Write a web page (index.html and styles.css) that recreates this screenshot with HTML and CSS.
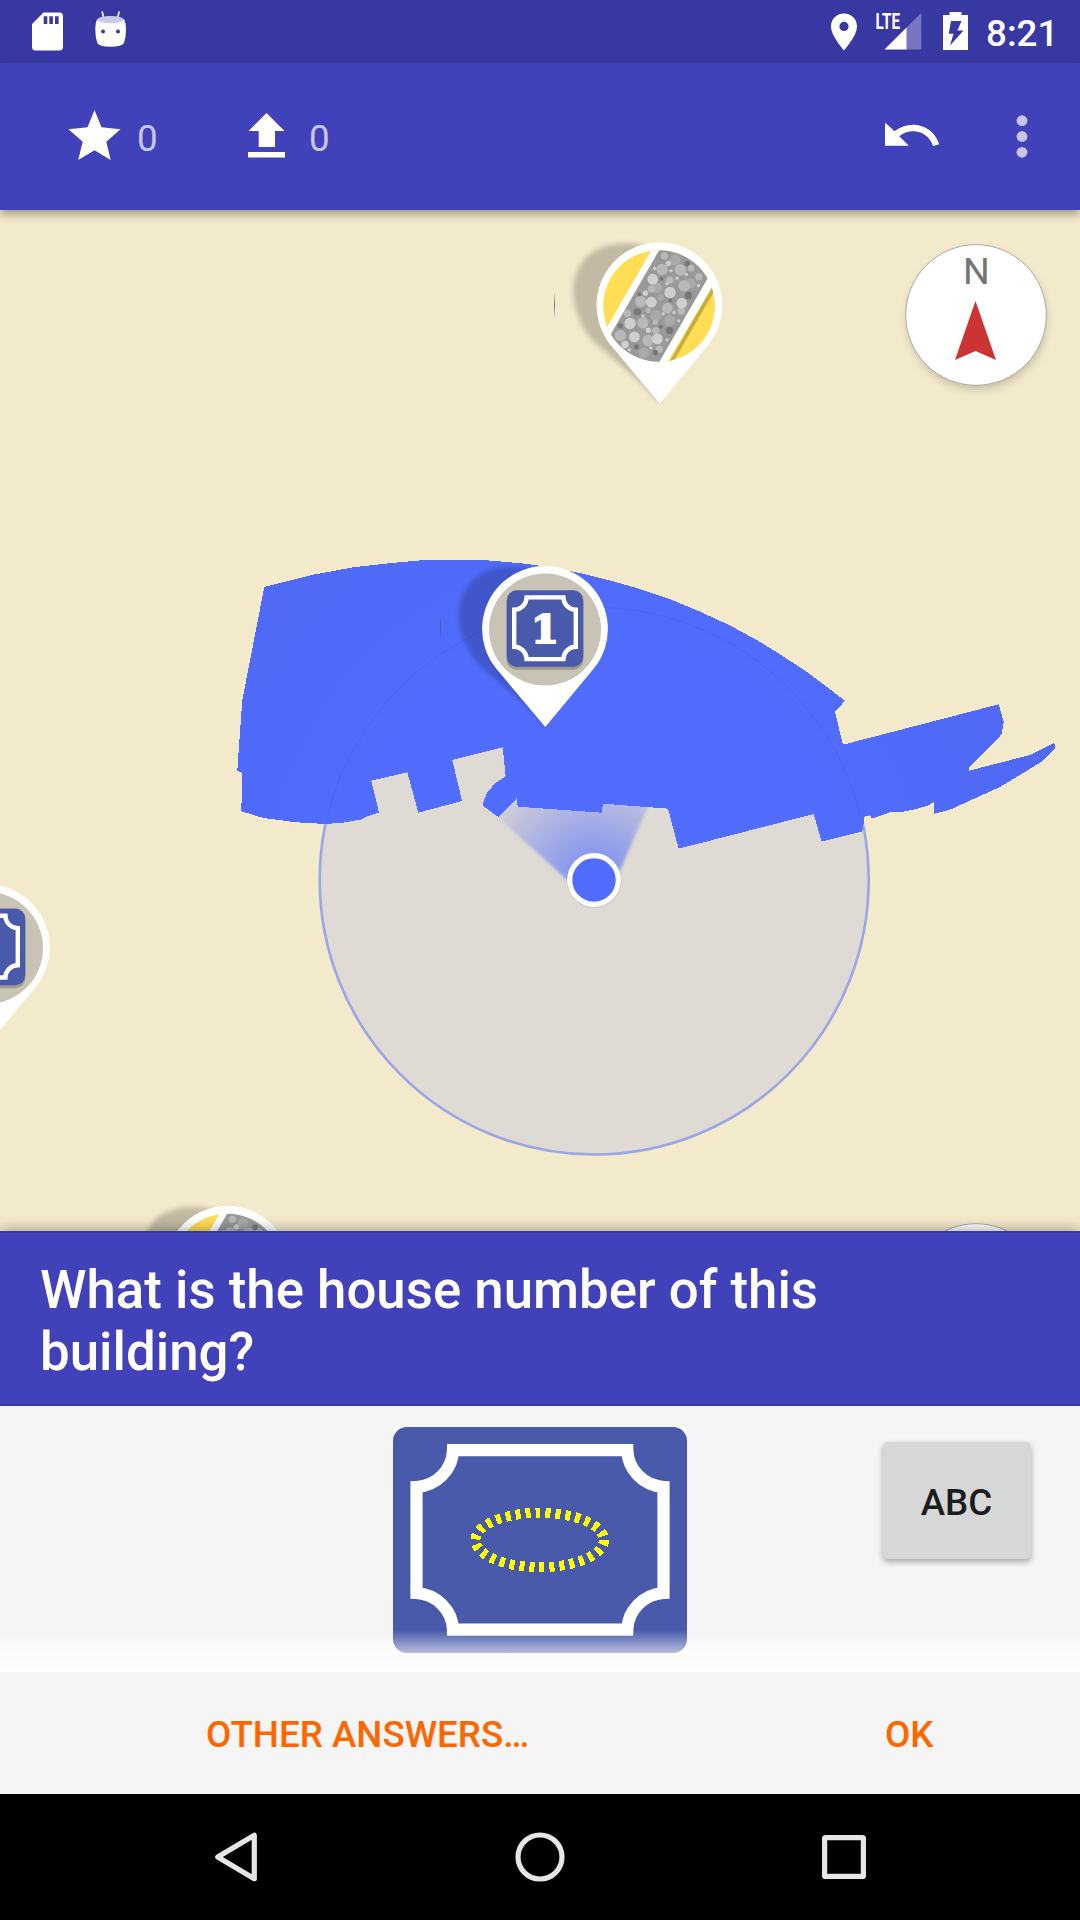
FILE: index.html
```
<!DOCTYPE html>
<html lang="en">
<head>
<meta charset="utf-8">
<title>Quest map</title>
<link rel="stylesheet" href="styles.css">
</head>
<body>
<div class="screen">
  <header class="status-bar">
    <svg class="sd-icon" width="32" height="63" viewBox="32 0 32 63"><path fill="#fff" fill-rule="evenodd" d="M43.500 12.500H59.500a3.500 3.500 0 0 1 3.500 3.500V47a3.500 3.500 0 0 1-3.500 3.500H35.500A3.500 3.500 0 0 1 32 47V24ZM43.700 16.300V24H47.300V16.300ZM49.300 16.300V24H52.900V16.300ZM55 16.300V24H58.600V16.300Z"/></svg>
    <svg class="robot-icon" width="32" height="63" viewBox="95 0 32 63"><path d="M102.300 12 104 20M119 12 117.300 20" stroke="#fff" stroke-width="1.600" stroke-linecap="round"/><path d="M97.500 19C101 22 120 22 123.800 19Q126 22 126 30 126 37 124 43 122 46.500 110.500 46.700 99 46.500 97.300 43 95.300 37 95.300 30 95.300 22 97.500 19Z" fill="#fff"/><ellipse cx="110.500" cy="19.600" rx="13" ry="3.700" fill="#cbc9e8"/><circle cx="103" cy="31.500" r="2" fill="#3838a3"/><circle cx="118" cy="31.500" r="2" fill="#3838a3"/></svg>
    <span class="spacer"></span>
    <svg class="pin-icon" width="27" height="63" viewBox="831 0 27 63"><path fill="#fff" fill-rule="evenodd" d="M844 13.500C836.500 13.500 831 19 831 26.500 831 36 844 50.300 844 50.300S857 36 857 26.500C857 19 851.500 13.500 844 13.500ZM844 31a4.600 4.600 0 1 1 0-9.200 4.600 4.600 0 0 1 0 9.200Z"/></svg>
    <svg class="signal-icon" width="47" height="63" viewBox="875 0 47 63"><path fill="#7876c0" d="M921.300 13V49.500H906V28Z"/><path fill="#fff" d="M906.500 27.500V49.500H884.500Z"/><text class="lte" x="875.500" y="29" textLength="24.500" lengthAdjust="spacingAndGlyphs">LTE</text></svg>
    <svg class="battery-icon" width="26" height="63" viewBox="942 0 26 63"><path fill="#fff" fill-rule="evenodd" d="M949.500 12H961.500V15H968V50H943V15H949.500ZM951 21 948.800 33.800H953.500L950 45.500 963.500 30.500H957.500L961.500 21Z"/></svg>
    <span class="clock">8:21</span>
  </header>

  <div class="toolbar">
    <svg class="star-icon" width="53" height="147" viewBox="68 63 53 147"><path fill="#fff" d="M94.500 110 101.500 127.300 120.500 129.200 106.300 141.800 110.700 160 94.500 150.300 78.200 160 82.700 141.800 68.500 129.200 87.500 127.300Z"/></svg>
    <span class="count">0</span>
    <svg class="upload-icon" width="38" height="147" viewBox="248 63 38 147"><path fill="#fff" d="M266.500 113 284.500 131H275V147H258.700V131H248.500ZM248 152H285V157.600H248Z"/></svg>
    <span class="count uploads">0</span>
    <span class="spacer"></span>
    <svg class="undo-icon" width="55" height="147" viewBox="885 63 55 147"><path fill="#fff" d="M885 122.500 894.500 131.300C900 127 906 124.800 913 124.800 925 124.800 935.500 132.500 939.200 144.200L933 146C930 137 922.500 131.300 913 131.300 908 131.300 903.300 133 899.300 136.300L908.800 145.800H885Z"/></svg>
    <svg class="more-icon" width="12" height="147" viewBox="1016.500 63 12 147"><g fill="#c6c6e9"><circle cx="1022.500" cy="120.700" r="5.400"/><circle cx="1022.500" cy="136.500" r="5.400"/><circle cx="1022.500" cy="152.300" r="5.400"/></g></svg>
  </div>

  <main class="map">
    <svg width="1080" height="1021" viewBox="0 210 1080 1021">
      <defs>
        <filter id="soft" x="-20%" y="-20%" width="140%" height="140%"><feGaussianBlur stdDeviation="2.600"/></filter>
        <filter id="edge" x="-20%" y="-20%" width="140%" height="140%"><feGaussianBlur stdDeviation="1.600"/></filter>
        <filter id="drop" x="-20%" y="-20%" width="140%" height="140%"><feGaussianBlur stdDeviation="5"/></filter>
        <radialGradient id="beam" gradientUnits="userSpaceOnUse" cx="594" cy="880" r="128">
          <stop offset=".2" stop-color="#516dff" stop-opacity=".6"/><stop offset="1" stop-color="#516dff" stop-opacity=".04"/>
        </radialGradient>
        <radialGradient id="area" gradientUnits="userSpaceOnUse" cx="594" cy="880" r="470">
          <stop offset=".5" stop-color="#516dff"/><stop offset="1" stop-color="#4f69f4"/>
        </radialGradient>
        <g id="pin">
          <path d="M.300 98.500C-14 79-48 53-69 33-94-1-90-34-69-52-50-66-12-66 6-48Z" fill="#000" fill-opacity=".2" filter="url(#soft)"/>
          <path d="M.300 98.200-48.400 40.300A62.900 62.900 0 1 1 48.400 40.300Z" fill="#fff"/>
        </g>
        <g id="plate">
          <circle cx="0" cy=".800" r="56" fill="#c8c3b5"/>
          <rect x="-38.300" y="-35.600" width="76.600" height="76.600" rx="10" fill="#000" fill-opacity=".22"/>
          <rect x="-38.300" y="-38.600" width="76.600" height="76.600" rx="10" fill="#4a5aab"/>
          <path d="M-18.400-31.400H18.400A12.500 12.500 0 0 0 30.800-19V18A12.500 12.500 0 0 0 18.400 30.300H-18.400A12.500 12.500 0 0 0-30.800 18V-19A12.500 12.500 0 0 0-18.400-31.400Z" fill="none" stroke="#fff" stroke-width="4.400"/>
        </g>
        <clipPath id="disc"><circle cx="358" cy="257.500" r="167.500"/></clipPath>
        <linearGradient id="tick" x2="0" y2="1"><stop offset="0" stop-color="#555570" stop-opacity="0"/><stop offset=".5" stop-color="#555570" stop-opacity=".8"/><stop offset="1" stop-color="#555570" stop-opacity="0"/></linearGradient>
        <g id="road" transform="scale(.3333) translate(-359 -255)"><g clip-path="url(#disc)">
          <path d="M150 50H580V460H150Z" fill="#ffde55"/>
          <path d="M531 200 393 439H381L519 196Z" fill="#c9ad43"/>
          <path d="M358 50 172 373 333 470H357L540 162 404 50Z" fill="#fff"/>
          <path d="M381 50 190 383 335 466 524 140 430 50Z" fill="#999"/>
          <g fill="#a9a9a9"><circle cx="406" cy="120" r="17"/><circle cx="452" cy="190" r="16"/><circle cx="352" cy="203" r="16"/><circle cx="348" cy="286" r="17"/><circle cx="313" cy="398" r="16"/><circle cx="390" cy="301" r="17"/><circle cx="362" cy="232" r="10"/></g>
          <g fill="#b9b9b9"><circle cx="374" cy="107" r="11"/><circle cx="367" cy="148" r="17"/><circle cx="422" cy="149" r="17"/><circle cx="454" cy="144" r="10"/><circle cx="477" cy="170" r="11"/><circle cx="390" cy="180" r="11"/><circle cx="433" cy="197" r="17"/><circle cx="303" cy="244" r="17"/><circle cx="335" cy="206" r="11"/><circle cx="383" cy="264" r="16"/><circle cx="425" cy="273" r="11"/><circle cx="263" cy="280" r="11"/><circle cx="309" cy="308" r="17"/><circle cx="242" cy="346" r="17"/><circle cx="325" cy="361" r="17"/><circle cx="348" cy="332" r="11"/><circle cx="359" cy="387" r="11"/><circle cx="325" cy="271" r="8"/><circle cx="347" cy="306" r="8"/></g>
          <g fill="#cfcfcf"><circle cx="339" cy="177" r="16"/><circle cx="391" cy="217" r="17"/><circle cx="335" cy="246" r="16"/><circle cx="426" cy="249" r="16"/><circle cx="271" cy="310" r="17"/><circle cx="284" cy="350" r="16"/><circle cx="353" cy="356" r="16"/><circle cx="256" cy="373" r="11"/><circle cx="386" cy="130" r="8"/><circle cx="317" cy="219" r="8"/><circle cx="326" cy="330" r="8"/><circle cx="394" cy="152" r="5"/><circle cx="440" cy="163" r="5"/><circle cx="412" cy="174" r="5"/><circle cx="476" cy="196" r="5"/><circle cx="381" cy="191" r="5"/><circle cx="370" cy="281" r="5"/><circle cx="403" cy="277" r="5"/><circle cx="417" cy="302" r="5"/><circle cx="310" cy="287" r="5"/><circle cx="382" cy="359" r="5"/><circle cx="269" cy="389" r="5"/><circle cx="334" cy="383" r="5"/><circle cx="345" cy="145" r="5"/></g>
          <g fill="#777"><circle cx="442" cy="130" r="8"/><circle cx="365" cy="176" r="6"/><circle cx="446" cy="226" r="11"/><circle cx="299" cy="222" r="6"/><circle cx="392" cy="241" r="6"/><circle cx="293" cy="275" r="11"/><circle cx="242" cy="317" r="8"/><circle cx="390" cy="331" r="11"/><circle cx="363" cy="320" r="6"/><circle cx="290" cy="380" r="8"/><circle cx="347" cy="397" r="8"/></g>
        </g></g>
      </defs>

      <circle cx="594.200" cy="880" r="274.500" fill="#dfdad3" stroke="#9ba6e6" stroke-width="2.600"/>
      <path d="M613 886 585 896 478 799 560 740 675 745Z" fill="url(#beam)" filter="url(#edge)"/>
      <path fill="url(#area)" shape-rendering="crispEdges" d="M264.300 587 313.300 574.700 353.300 567.300 391.700 563 421.700 560.300 454 559.700 486.700 560.300 521.700 563.300 536.700 565.300 578.300 572.700 610 580.500 640 589 672 600 702 612.500 730 625.500 756.700 640 773.300 650 806.700 671.700 845 700.700 835 711.700 842.700 744 847 743.700 998.700 704.300 1003.700 721.700 1001.700 734.300 969 767.300V770.700L1030 755 1053.300 743.300 1055 744 1054.700 748.300 1043.300 760.700 1000 787 950 809.700 934.300 813.700V802L926.700 806 913.300 809.700 901.700 812 890 812.300 871.700 818.700 870.300 815.300 864.700 816.300 862.300 831.300 821.700 841.700 813.700 814 678.700 848.700 668 808.700 603 803.700 601.700 812.700 517.700 806.700 516.700 798.300 498.300 817 482.300 805.300 486.700 793.300 495 783.300 505.700 776.300 502.700 747.300 452.300 760 462 801 418.300 812.700 407.300 772.300 371.300 780.700 379 812.700 368.300 816 361.700 819.300 343.300 822.700 325 824 296.700 822.300 263.300 818 241.300 811.300 242.300 773.300 237.300 770.700 242.300 700Z"/>
      <path d="M327 818A274.500 274.500 0 0 1 861 818" fill="none" stroke="#4763e6" stroke-width=".7"/>
      <rect x="554" y="291" width="1" height="28" fill="url(#tick)"/>
      <rect x="440" y="616" width="1" height="24" fill="url(#tick)"/>

      <circle cx="594" cy="880.500" r="27.400" fill="#000" fill-opacity=".12"/>
      <circle cx="594" cy="880" r="24.300" fill="#516dff" stroke="#fff" stroke-width="5.200"/>

      <g transform="translate(659.400 305.200)"><use href="#pin"/><use href="#road"/></g>
      <g transform="translate(545 628.800)"><use href="#pin"/><use href="#plate"/><text class="plate-digit" x="0" y="14">1</text></g>
      <g transform="translate(-13 947.200)"><use href="#pin"/><use href="#plate"/></g>
      <g transform="translate(227.500 1268.700)"><use href="#pin"/><use href="#road"/></g>

      <circle cx="977" cy="320" r="69" fill="#000" fill-opacity=".2" filter="url(#drop)"/>
      <circle cx="976" cy="315" r="70.300" fill="#fff" stroke="#aaa" stroke-width="1"/>
      <path d="M975.500 301 996 360 975.500 351 955 360Z" fill="#c33"/>
      <text class="compass-n" x="976.300" y="283.700">N</text>
      <circle cx="976" cy="1294" r="70.300" fill="#fff" stroke="#aaa" stroke-width="1"/>
    </svg>
  </main>

  <section class="question">What is the house number of this<br>building?</section>

  <section class="answer">
    <div class="sign">
      <svg width="294" height="226" viewBox="0 0 294 226">
        <rect width="294" height="226" rx="14" fill="#4a5aab"/>
        <path d="M60 23.200H234.300A39 38 0 0 0 270.500 60V166A39 38 0 0 0 234.300 202.600H60A39 38 0 0 0 23.500 166V60A39 38 0 0 0 60 23.200Z" fill="none" stroke="#fff" stroke-width="12.200"/>
        <ellipse cx="146.700" cy="113" rx="64.300" ry="27.200" fill="none" stroke="#ff0" stroke-width="10" stroke-dasharray="5 5" shape-rendering="crispEdges"/>
      </svg>
    </div>
    <button class="abc">ABC</button>
    <div class="fade"></div>
  </section>

  <div class="actions">
    <span class="action other">OTHER ANSWERS…</span>
    <span class="action ok">OK</span>
  </div>

  <nav class="nav-bar">
    <svg width="60" height="60" viewBox="206 1827 60 60"><path d="M254.300 1835.300V1878.700L217.700 1857Z" fill="none" stroke="#e6e6e6" stroke-width="5.200" stroke-linejoin="round"/></svg>
    <svg width="60" height="60" viewBox="510 1827 60 60"><circle cx="540" cy="1857" r="22" fill="none" stroke="#e6e6e6" stroke-width="5.200"/></svg>
    <svg width="60" height="60" viewBox="814 1827 60 60"><rect x="824.600" y="1837.600" width="38.800" height="38.800" rx="1" fill="none" stroke="#e6e6e6" stroke-width="5.200"/></svg>
  </nav>
</div>
</body>
</html>
```
FILE: styles.css
```
* { box-sizing: border-box; }
body {
  margin: 0;
  font-family: Roboto, "Liberation Sans", sans-serif;
}
svg { display: block; flex: none; }
.screen {
  width: 1080px;
  height: 1920px;
  display: flex;
  flex-direction: column;
  overflow: hidden;
}
.spacer { flex: 1; }

.status-bar {
  flex: none;
  height: 63px;
  display: flex;
  align-items: center;
  padding: 0 26px 0 32px;
  background: #3838a3;
  color: #fff;
}
.robot-icon { margin-left: 31px; }
.signal-icon { margin-left: 17px; }
.battery-icon { margin-left: 20px; }
.clock {
  width: 68px;
  margin-left: 18px;
  padding-top: 5px;
  font-size: 36.75px;
  font-weight: 500;
  line-height: 60px;
  white-space: nowrap;
}
.lte {
  font-size: 21.5px;
  font-weight: 700;
  fill: #fff;
}

.toolbar {
  flex: none;
  position: relative;
  z-index: 1;
  height: 147px;
  display: flex;
  align-items: center;
  padding: 0 52px 0 68px;
  background: #4141b9;
  box-shadow: 0 4px 9px rgba(0, 0, 0, .36);
}
.count {
  width: 22px;
  margin: 4px 0 0 16px;
  font-size: 36.75px;
  font-weight: 400;
  color: #c6c6e9;
}
.uploads { margin-left: 23px; }
.upload-icon { margin-left: 89px; }
.more-icon { margin-left: 76px; }

.map {
  flex: none;
  height: 1021px;
  background: #f3e9cb;
}
.plate-digit {
  font: 700 40px "DejaVu Serif", serif;
  fill: #fff;
  stroke: #fff;
  stroke-width: 2px;
  text-anchor: middle;
}
.compass-n {
  font-size: 37.5px;
  fill: #757575;
  text-anchor: middle;
}

.question {
  flex: none;
  position: relative;
  z-index: 1;
  height: 175px;
  padding: 26px 40px 0;
  background: #4141b9;
  border-top: 2px solid #3939a4;
  border-bottom: 2px solid #3939a4;
  box-shadow: 0 0 14px rgba(0, 0, 0, .4);
  color: #fff;
  font-size: 52.8px;
  font-weight: 500;
  line-height: 62px;
}

.answer {
  flex: none;
  position: relative;
  z-index: 2;
  height: 266px;
  display: grid;
  grid-template-columns: 1fr 294px 1fr;
  align-items: start;
  background: #f5f5f5;
}
.sign {
  grid-column: 2;
  margin-top: 21px;
  background: #fff;
}
.abc {
  justify-self: end;
  width: 148px;
  height: 117px;
  margin: 36px 49.5px 0 0;
  padding: 4px 0 0;
  border: 0;
  border-radius: 5px;
  background: #d6d8d7;
  box-shadow: 0 3px 6px rgba(0, 0, 0, .32);
  color: #1d1d1d;
  font: 500 36.75px Roboto, sans-serif;
}
.fade {
  position: absolute;
  left: 0;
  right: 0;
  bottom: 0;
  height: 42px;
  background: linear-gradient(rgba(255, 255, 255, 0), rgba(255, 255, 255, .55) 50%, #fff);
}

.actions {
  flex: none;
  position: relative;
  z-index: 2;
  height: 122px;
  display: flex;
  align-items: center;
  padding: 2px 0 0 206px;
  background: #f5f5f5;
}
.action {
  font-size: 36.75px;
  font-weight: 500;
  color: #f60;
  white-space: nowrap;
}
.other { width: 679px; }

.nav-bar {
  flex: none;
  height: 126px;
  display: flex;
  align-items: center;
  justify-content: center;
  gap: 244px;
  background: #000;
}
```
